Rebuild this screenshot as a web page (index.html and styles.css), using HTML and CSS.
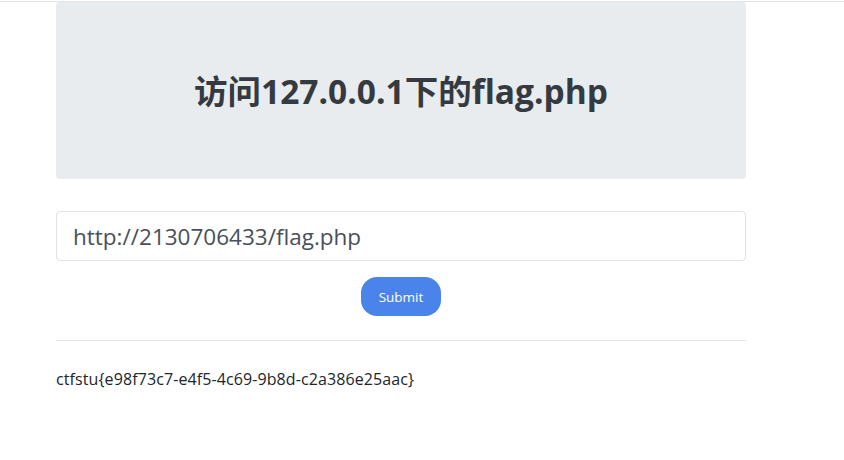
FILE: index.html
```html
<!DOCTYPE html>
<html lang="zh">
<head>
<meta charset="utf-8">
<title>flag</title>
<link rel="stylesheet" href="styles.css">
</head>
<body>
<div class="topline"></div>
<div class="container">
  <div class="jumbotron">
    <h1 class="title">访问127.0.0.1下的flag.php</h1>
  </div>
  <form class="form">
    <input class="url-input" type="text" value="http://2130706433/flag.php">
    <button class="submit" type="button">Submit</button>
  </form>
  <hr class="divider">
  <p class="result">ctfstu{e98f73c7-e4f5-4c69-9b8d-c2a386e25aac}</p>
</div>
</body>
</html>
```
FILE: styles.css
```css
html, body {
  margin: 0;
  padding: 0;
  background: #fff;
  font-family: "Open Sans", "Noto Sans CJK SC", sans-serif;
  color: #212529;
}
.topline {
  height: 1px;
  margin-top: 1px;
  background: #e3e3e3;
}
.container {
  width: 690px;
  margin-left: 56px;
}
.jumbotron {
  background: #e9ecef;
  border-radius: 4px;
  height: 177px;
  display: flex;
  align-items: center;
  justify-content: center;
}
.title {
  margin: 0 0 2px;
  font-size: 33.5px;
  font-weight: 700;
  color: #343a40;
  font-family: "Open Sans", "Noto Sans CJK SC", sans-serif;
}
.form {
  margin-top: 32px;
  display: flex;
  flex-direction: column;
  align-items: center;
}
.url-input {
  box-sizing: border-box;
  width: 100%;
  height: 50px;
  border: 1px solid #dfe2e6;
  border-radius: 4px;
  padding: 0 16px;
  font-family: "Open Sans", sans-serif;
  font-size: 22.5px;
  color: #495057;
  outline: none;
}
.submit {
  margin-top: 16px;
  width: 80px;
  height: 39px;
  border: none;
  border-radius: 16px;
  background: #4a84ea;
  color: #fff;
  font-family: "Open Sans", sans-serif;
  font-size: 13.5px;
}
.divider {
  margin: 24px 0 0;
  border: 0;
  border-top: 1px solid #e5e5e5;
}
.result {
  margin: 27px 0 0;
  font-size: 16px;
  color: #212529;
  letter-spacing: 0.1px;
}
```
